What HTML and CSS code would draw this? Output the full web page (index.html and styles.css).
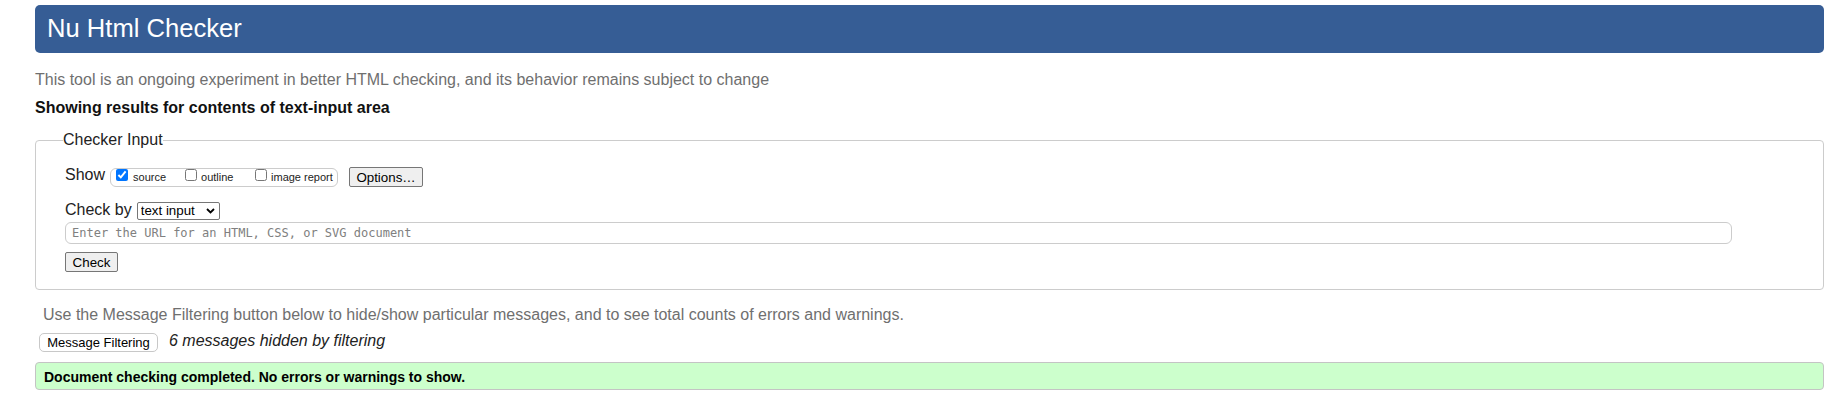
FILE: index.html
```html
<!DOCTYPE html>
<html lang="en">
<head>
<meta charset="utf-8">
<title>Nu Html Checker</title>
<link rel="stylesheet" href="styles.css">
</head>
<body>
<div class="page">
  <h1 class="masthead">Nu Html Checker</h1>
  <p class="tagline">This tool is an ongoing experiment in better HTML checking, and its behavior remains subject to change</p>
  <p class="results">Showing results for contents of text-input area</p>
  <form class="checker">
    <fieldset class="inputbox">
      <legend class="legend">Checker Input</legend>
      <div class="row row-show">
        <span class="label">Show</span>
        <span class="showgroup">
          <label class="opt opt-source"><input type="checkbox" class="cb" checked><span class="opttext">source</span></label>
          <label class="opt opt-outline"><input type="checkbox" class="cb"><span class="opttext">outline</span></label>
          <label class="opt opt-image"><input type="checkbox" class="cb"><span class="opttext">image report</span></label>
        </span>
        <button type="button" class="btn btn-options">Options…</button>
      </div>
      <div class="row row-checkby">
        <span class="label">Check by</span>
        <span class="selwrap">
          <select class="sel"><option>text input</option></select>
          <svg class="chev" width="9" height="6" viewBox="0 0 9 6" aria-hidden="true"><path d="M1 1 L4.5 4.5 L8 1" fill="none" stroke="#000" stroke-width="1.8"/></svg>
        </span>
      </div>
      <input type="text" class="url" placeholder="Enter the URL for an HTML, CSS, or SVG document">
      <div class="row-check"><button type="button" class="btn btn-check">Check</button></div>
    </fieldset>
  </form>
  <p class="filterinfo">Use the Message Filtering button below to hide/show particular messages, and to see total counts of errors and warnings.</p>
  <div class="filterrow">
    <button type="button" class="btn-filter">Message Filtering</button>
    <span class="hidden-count">6 messages hidden by filtering</span>
  </div>
  <div class="success">Document checking completed. No errors or warnings to show.</div>
</div>
</body>
</html>
```

FILE: styles.css
```css
html, body {
  margin: 0;
  padding: 0;
  background: #fff;
}
.page {
  padding: 5px 22px 0 35px;
  font-family: "Liberation Sans", Arial, sans-serif;
  color: #000;
}
.masthead {
  margin: 0;
  height: 48px;
  line-height: 46px;
  background: #365d95;
  border-radius: 5px;
  padding: 0 12px;
  color: #fff;
  font-size: 25.6px;
  font-weight: normal;
}
.tagline {
  margin: 18px 0 0 0;
  font-size: 16px;
  line-height: 18px;
  color: #6f6f6f;
}
.results {
  margin: 10px 0 0 0;
  font-size: 16px;
  line-height: 18px;
  font-weight: bold;
  color: #111;
}
.checker {
  margin: 14px 0 0 0;
}
.inputbox {
  margin: 0;
  padding: 18px 29px 17px 29px;
  border: 1px solid #ccc;
  border-radius: 4px;
  min-width: 0;
}
.legend {
  padding: 0;
  margin-left: -2px;
  font-size: 16px;
  line-height: 18px;
  color: #222;
}
.row {
  display: flex;
  align-items: flex-start;
}
.row-show {
  height: 20px;
}
.label {
  font-size: 16px;
  line-height: 18px;
  color: #222;
  margin-top: -1px;
  white-space: nowrap;
}
.showgroup {
  display: flex;
  align-items: flex-start;
  flex-shrink: 0;
  margin: 1px 0 0 5px;
  height: 19px;
  width: 228px;
  border: 1px solid #ccc;
  border-radius: 6px;
  box-sizing: border-box;
}
.opt {
  display: flex;
  align-items: flex-start;
  flex-shrink: 0;
  white-space: nowrap;
  font-size: 11px;
  color: #222;
}
.opttext {
  line-height: 13px;
  margin-top: 2px;
}
.opt-source { width: 69px; }
.opt-outline { width: 70px; }
.cb {
  width: 12px;
  height: 12px;
  margin: 0 5px 0 5px;
  flex-shrink: 0;
}
.opt-outline .cb, .opt-image .cb { margin-right: 4px; }
.btn {
  font-family: "Liberation Sans", Arial, sans-serif;
  font-size: 13.33px;
  background: #efefef;
  border: 1px solid #767676;
  border-radius: 2px;
  color: #000;
  padding: 0;
  height: 20px;
}
.btn-options {
  margin-left: 11px;
  width: 74px;
}
.row-checkby {
  margin-top: 15px;
  height: 18px;
}
.selwrap {
  position: relative;
  display: block;
  margin-left: 5px;
  height: 18px;
}
.sel {
  display: block;
  appearance: none;
  -webkit-appearance: none;
  font-family: "Liberation Sans", Arial, sans-serif;
  font-size: 13.33px;
  line-height: 16px;
  height: 18px;
  width: 83px;
  padding: 0 0 0 3px;
  border: 1px solid #767676;
  border-radius: 2px;
  background: #fff;
  color: #000;
}
.chev {
  position: absolute;
  right: 5px;
  top: 6px;
  pointer-events: none;
}
.url {
  display: block;
  box-sizing: border-box;
  margin-top: 2px;
  width: 1667px;
  height: 22px;
  border: 1px solid #ccc;
  border-radius: 6px;
  padding: 0 6px;
  font-family: "DejaVu Sans Mono", "Liberation Mono", monospace;
  font-size: 12px;
}
.url::placeholder {
  color: #808080;
}
.row-check {
  margin-top: 8px;
}
.btn-check {
  width: 53px;
}
.filterinfo {
  margin: 16px 0 0 0;
  padding-left: 8px;
  font-size: 16px;
  line-height: 18px;
  color: #6f6f6f;
}
.filterrow {
  display: flex;
  align-items: flex-start;
  margin-top: 9px;
  padding-left: 4px;
  height: 19px;
}
.btn-filter {
  font-family: "Liberation Sans", Arial, sans-serif;
  font-size: 13px;
  height: 19px;
  width: 119px;
  padding: 0;
  background: #fff;
  border: 1px solid #c8c8c8;
  border-radius: 5px;
  color: #000;
}
.hidden-count {
  margin: -1px 0 0 11px;
  font-style: italic;
  font-size: 16px;
  line-height: 18px;
  color: #222;
}
.success {
  margin-top: 10px;
  height: 28px;
  box-sizing: border-box;
  padding: 2px 0 0 8px;
  line-height: 24px;
  background: #ccffcc;
  border: 1px solid #c4c4c4;
  border-radius: 4px;
  font-size: 14px;
  font-weight: bold;
  color: #000;
}
```
